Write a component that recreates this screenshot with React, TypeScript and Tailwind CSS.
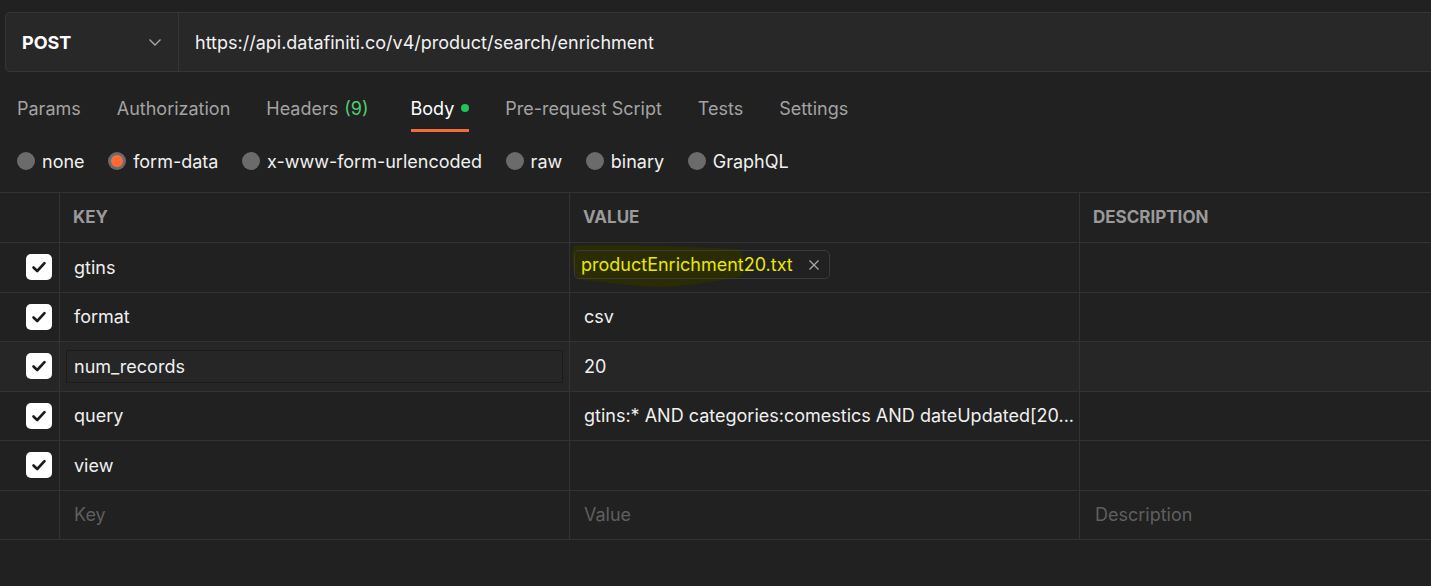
import React from "react";

const tabs = [
  { label: "Params" },
  { label: "Authorization" },
  { label: "Headers", count: "(9)", extra: true },
  { label: "Body", active: true },
  { label: "Pre-request Script" },
  { label: "Tests" },
  { label: "Settings" },
];

const radios = [
  { label: "none" },
  { label: "form-data", active: true },
  { label: "x-www-form-urlencoded" },
  { label: "raw" },
  { label: "binary" },
  { label: "GraphQL" },
];

function Check() {
  return (
    <div className="w-[26px] h-[26px] rounded-[5px] bg-white flex items-center justify-center">
      <svg width="16" height="16" viewBox="0 0 16 16" fill="none">
        <path d="M2.5 8.5 L6.2 12 L13.5 4.2" stroke="#1a1a1a" strokeWidth="2.6" strokeLinecap="round" strokeLinejoin="round" />
      </svg>
    </div>
  );
}

type Row = { key: string; value?: string; hover?: boolean; input?: boolean; check?: boolean; placeholder?: boolean };

export default function App() {
  const rows: Row[] = [
    { key: "gtins", value: "file", check: true },
    { key: "format", value: "csv", check: true },
    { key: "num_records", value: "20", check: true, hover: true, input: true },
    { key: "query", value: "gtins:* AND categories:comestics AND dateUpdated[20...", check: true },
    { key: "view", value: "", check: true },
    { key: "Key", value: "Value", placeholder: true },
  ];

  return (
    <div className="w-[1431px] h-[586px] bg-[#212121] overflow-hidden font-['Inter',sans-serif] text-[18px] text-[#ececec]">
      <div className="pt-[12px] pl-[5px]">
        <div className="h-[60px] flex border border-r-0 border-[#363636] rounded-l-[5px] bg-[#282828]">
          <div className="w-[173px] shrink-0 border-r border-[#363636] flex items-center justify-between pl-[16px] pr-[16px]">
            <span className="font-bold text-white text-[18px]">POST</span>
            <svg width="14" height="9" viewBox="0 0 14 9" fill="none">
              <path d="M1.5 1.5 L7 7 L12.5 1.5" stroke="#a8a8a8" strokeWidth="1.4" />
            </svg>
          </div>
          <div className="flex items-center pl-[16px] text-[#f2f2f2]">https://api.datafiniti.co/v4/product/search/enrichment</div>
        </div>
      </div>

      <div className="flex h-[46px] mt-[14px] pl-[17px] gap-[36px]">
        {tabs.map((t) => (
          <div key={t.label} className={`flex items-center h-full border-b-[3px] pt-[1px] ${t.extra ? "mr-[6px]" : ""} ${t.active ? "border-[#f26b3a] text-white" : "border-transparent text-[#a3a3a3]"}`}>
            <span>{t.label}</span>
            {t.count && <span className="ml-[6px] text-[#4fcc72]">{t.count}</span>}
            {t.active && <span className="ml-[7px] w-[8px] h-[8px] rounded-full bg-[#1fc35a]" />}
          </div>
        ))}
      </div>

      <div className="flex items-center h-[38px] mt-[10px] pl-[17px] gap-[23.6px]">
        {radios.map((r) => (
          <div key={r.label} className="flex items-center gap-[7px]">
            {r.active ? (
              <div className="w-[18px] h-[18px] rounded-full bg-[#6b6b6b] flex items-center justify-center">
                <div className="w-[12px] h-[12px] rounded-full bg-[#ff6a35]" />
              </div>
            ) : (
              <div className="w-[18px] h-[18px] rounded-full bg-[#6b6b6b]" />
            )}
            <span className="text-[#f0f0f0]">{r.label}</span>
          </div>
        ))}
      </div>

      <div className="mt-[12px] border-t border-[#333333]">
        <div className="flex h-[50px] border-b border-[#333333] text-[17px] font-bold text-[#9a9a9a]">
          <div className="w-[60px] shrink-0 border-r border-[#333333]" />
          <div className="w-[510px] shrink-0 border-r border-[#333333] flex items-center pl-[13px]">KEY</div>
          <div className="w-[510px] shrink-0 border-r border-[#333333] flex items-center pl-[13px]">VALUE</div>
          <div className="flex-1 flex items-center pl-[13px]">DESCRIPTION</div>
        </div>
        {rows.map((r) => (
          <div key={r.key} className={`flex h-[49.5px] border-b border-[#333333] ${r.hover ? "bg-[#262626]" : ""}`}>
            <div className="w-[60px] shrink-0 border-r border-[#333333] flex items-center pl-[26px]">
              {r.check && <Check />}
            </div>
            <div className="w-[510px] shrink-0 border-r border-[#333333] flex items-center px-[6px]">
              {r.input ? (
                <div className="w-full h-[33px] border border-[#1b1b1b] flex items-center pl-[7px] text-[#f0f0f0]">{r.key}</div>
              ) : (
                <span className={`pl-[8px] ${r.placeholder ? "text-[#5f5f5f]" : "text-[#f0f0f0]"}`}>{r.key}</span>
              )}
            </div>
            <div className="w-[510px] shrink-0 border-r border-[#333333] flex items-center pl-[14px] pr-[4px] min-w-0">
              {r.value === "file" ? (
                <div className="relative -ml-[10px] -mt-[5px]">
                  <svg className="absolute left-[-4px] top-[-6px]" width="176" height="44" viewBox="0 0 176 44">
                    <path d="M4 2 C40 0, 120 3, 168 5 C174 6, 175 20, 172 32 C150 37, 120 42, 90 43 C60 42, 30 38, 8 35 C2 26, 0 10, 4 2 Z" fill="#2c2c04" />
                  </svg>
                  <div className="relative h-[29px] border border-[#3a3a3a] rounded-[5px] flex items-center pl-[6px] pr-[9px] gap-[15px]">
                    <span className="text-[#e8e800]">productEnrichment20.txt</span>
                    <svg width="12" height="12" viewBox="0 0 12 12">
                      <path d="M1.5 1.5 L10.5 10.5 M10.5 1.5 L1.5 10.5" stroke="#a8a8a8" strokeWidth="1.3" />
                    </svg>
                  </div>
                </div>
              ) : (
                <span className={`whitespace-nowrap ${r.placeholder ? "text-[#5f5f5f]" : "text-[#f0f0f0]"}`}>{r.value}</span>
              )}
            </div>
            <div className="flex-1 flex items-center pl-[15px]">
              {r.placeholder && <span className="text-[#5f5f5f]">Description</span>}
            </div>
          </div>
        ))}
      </div>
    </div>
  );
}
